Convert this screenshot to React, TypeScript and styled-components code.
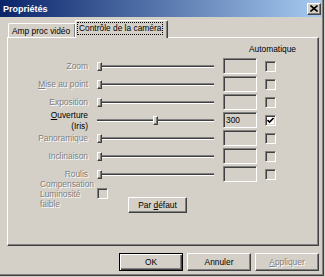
import React from "react";
import styled, { createGlobalStyle, css } from "styled-components";

const Global = createGlobalStyle`
  html, body { margin: 0; padding: 0; background: #d4d0c8; }
  body { font-family: "Liberation Sans", Arial, sans-serif; font-size: 8.4px; color: #000; }
`;

const raised = css`
  border: 1px solid;
  border-color: #fff #404040 #404040 #fff;
  box-shadow: inset -1px -1px 0 #808080;
`;

const sunken = css`
  border: 1px solid;
  border-color: #808080 #fff #fff #808080;
  box-shadow: inset 1px 1px 0 #404040, inset -1px -1px 0 #d4d0c8;
`;

const Window = styled.div`
  width: 324px;
  height: 276px;
  box-sizing: border-box;
  background: #d4d0c8;
  border-right: 1px solid #404040;
  border-bottom: 1px solid #404040;
  box-shadow: inset -1px -1px 0 #808080;
  display: flex;
  flex-direction: column;
`;

const TitleBar = styled.div`
  height: 17px;
  margin-right: 1px;
  box-sizing: border-box;
  display: flex;
  align-items: center;
  justify-content: space-between;
  padding: 0 1px 0 3px;
  background: linear-gradient(to right, #0a246a, #a6caf0);
`;

const Title = styled.span`
  color: #fff;
  font-weight: bold;
  font-size: 9px;
`;

const CloseButton = styled.div`
  width: 14px;
  height: 12px;
  box-sizing: border-box;
  background: #d4d0c8;
  ${raised};
  display: flex;
  align-items: center;
  justify-content: center;
`;

const Body = styled.div`
  flex: 1;
  display: flex;
  flex-direction: column;
  padding: 3px 4px 0 7px;
`;

const TabStrip = styled.div`
  display: flex;
  align-items: flex-end;
  height: 17px;
  padding-left: 1px;
`;

const Tab = styled.div<{ $active?: boolean }>`
  box-sizing: border-box;
  background: #d4d0c8;
  border-top: 1px solid #fff;
  border-left: 1px solid #fff;
  border-right: 1px solid #404040;
  box-shadow: inset -1px 0 0 #808080;
  border-radius: 2px 2px 0 0;
  white-space: nowrap;
  ${(p) =>
    p.$active
      ? css`
          position: relative;
          z-index: 1;
          height: 18px;
          margin-bottom: -1px;
          margin-left: -1px;
          width: 93px;
          padding: 2px 0 0 2px;
        `
      : css`
          height: 14px;
          width: 68px;
          padding: 2px 0 0 3px;
        `}
`;

const Focus = styled.span`
  outline: 1px dotted #000;
  outline-offset: 0;
  padding: 0 1px;
  line-height: 11px;
  display: inline-block;
`;

const Panel = styled.div`
  height: 209px;
  box-sizing: border-box;
  ${raised};
  padding-top: 5px;
  display: flex;
  flex-direction: column;
`;

const Header = styled.div`
  height: 12px;
  line-height: 12px;
  padding-left: 241px;
  margin-bottom: 2px;
`;

const Row = styled.div`
  height: 18px;
  display: flex;
  align-items: center;
`;

const Label = styled.div<{ $disabled?: boolean }>`
  width: 80px;
  flex: none;
  text-align: right;
  line-height: 11px;
  padding-top: 1px;
  white-space: nowrap;
  ${(p) =>
    p.$disabled &&
    css`
      color: #808080;
      text-shadow: 1px 1px 0 #fff;
    `}
`;

const Slider = styled.div`
  position: relative;
  margin-left: 9px;
  width: 117px;
  height: 9px;
  flex: none;
  display: flex;
  align-items: center;
`;

const Track = styled.div`
  width: 100%;
  height: 3px;
  box-sizing: border-box;
  background: #404040;
  border-top: 1px solid #808080;
  border-bottom: 1px solid #fff;
`;

const Thumb = styled.div`
  position: absolute;
  top: 0;
  width: 5px;
  height: 9px;
  box-sizing: border-box;
  background: #d4d0c8;
  ${raised};
`;

const Edit = styled.div`
  margin-left: 9px;
  width: 34px;
  height: 16px;
  flex: none;
  box-sizing: border-box;
  ${sunken};
  background: #d4d0c8;
  padding-left: 2px;
  line-height: 14px;
`;

const Check = styled.div<{ $enabled?: boolean }>`
  width: 11px;
  height: 11px;
  flex: none;
  box-sizing: border-box;
  ${sunken};
  background: ${(p) => (p.$enabled ? "#fff" : "#d4d0c8")};
  display: flex;
  align-items: center;
  justify-content: center;
`;

const CheckCell = styled.div`
  margin-left: 8px;
  display: flex;
`;

const CompBlock = styled.div`
  margin-top: -4px;
  display: flex;
  align-items: flex-start;
`;

const CompLabel = styled.div`
  margin-left: 32px;
  width: 50px;
  line-height: 10px;
  color: #808080;
  text-shadow: 1px 1px 0 #fff;
`;

const CompCheck = styled.div`
  margin: 9px 0 0 7px;
  display: flex;
`;

const Button = styled.div<{ $default?: boolean; $disabled?: boolean }>`
  box-sizing: border-box;
  background: #d4d0c8;
  display: flex;
  align-items: center;
  justify-content: center;
  white-space: nowrap;
  ${(p) =>
    p.$default
      ? css`
          border: 1px solid #000;
          box-shadow: inset 1px 1px 0 #fff, inset -1px -1px 0 #404040, inset -2px -2px 0 #808080;
        `
      : raised}
  ${(p) =>
    p.$disabled &&
    css`
      color: #808080;
      text-shadow: 1px 1px 0 #fff;
    `}
`;

const DefaultButton = styled(Button)`
  margin: 18px 0 0 20px;
  width: 59px;
  height: 16px;
`;

const ButtonRow = styled.div`
  margin-top: 7px;
  display: flex;
  justify-content: flex-end;
  gap: 4px;
`;

const DialogButton = styled(Button)`
  width: 64px;
  height: 18px;
`;

const U = styled.span`
  text-decoration: underline;
`;

type RowData = {
  label: React.ReactNode;
  enabled?: boolean;
  value?: string;
  pos: number;
  auto?: boolean;
};

const rows: RowData[] = [
  { label: "Zoom", pos: 0 },
  { label: <><U>M</U>ise au point</>, pos: 0 },
  { label: "Exposition", pos: 0 },
  { label: <><U>O</U>uverture<br />(Iris)</>, enabled: true, value: "300", pos: 0.5, auto: true },
  { label: "Panoramique", pos: 0 },
  { label: "Inclinaison", pos: 0 },
  { label: "Roulis", pos: 0 },
];

const CloseIcon = () => (
  <svg width="8" height="7" viewBox="0 0 8 7">
    <path d="M0.5 0.5 L7.5 6.5 M7.5 0.5 L0.5 6.5" stroke="#000" strokeWidth="1.6" />
  </svg>
);

const CheckMark = () => (
  <svg width="7" height="7" viewBox="0 0 7 7">
    <polyline points="0.5,3 2.5,5 6.5,1" fill="none" stroke="#000" strokeWidth="1.6" />
  </svg>
);

export default function App() {
  return (
    <>
      <Global />
      <Window>
        <TitleBar>
          <Title>Propriétés</Title>
          <CloseButton>
            <CloseIcon />
          </CloseButton>
        </TitleBar>
        <Body>
          <TabStrip>
            <Tab>Amp proc vidéo</Tab>
            <Tab $active>
              <Focus>Contrôle de la caméra</Focus>
            </Tab>
          </TabStrip>
          <Panel>
            <Header>Automatique</Header>
            {rows.map((r, i) => (
              <Row key={i}>
                <Label $disabled={!r.enabled}>{r.label}</Label>
                <Slider>
                  <Track />
                  <Thumb style={{ left: `${r.pos * (117 - 5)}px` }} />
                </Slider>
                <Edit>{r.value ?? ""}</Edit>
                <CheckCell>
                  <Check $enabled={r.enabled}>{r.auto && <CheckMark />}</Check>
                </CheckCell>
              </Row>
            ))}
            <CompBlock>
              <CompLabel>
                Compensation
                <br />
                Luminosité
                <br />
                faible
              </CompLabel>
              <CompCheck>
                <Check />
              </CompCheck>
              <DefaultButton>
                <span>
                  Par <U>d</U>éfaut
                </span>
              </DefaultButton>
            </CompBlock>
          </Panel>
          <ButtonRow>
            <DialogButton $default>OK</DialogButton>
            <DialogButton>Annuler</DialogButton>
            <DialogButton $disabled>
              <span>
                <U>A</U>ppliquer
              </span>
            </DialogButton>
          </ButtonRow>
        </Body>
      </Window>
    </>
  );
}
